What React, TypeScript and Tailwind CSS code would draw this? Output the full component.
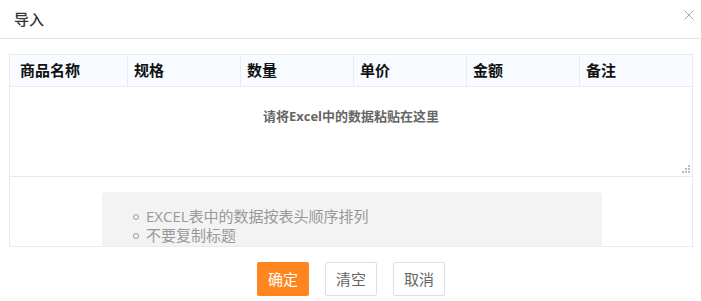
import React from "react";

const cols = ["商品名称", "规格", "数量", "单价", "金额", "备注"];

export default function App() {
  return (
    <div
      className="w-[701px] h-[301px] bg-white relative overflow-hidden"
      style={{ fontFamily: '"Open Sans", "Noto Sans CJK SC", sans-serif' }}
    >
      <div className="h-[39px] border-b border-[#e5e5e5] flex items-center pl-[14px]">
        <span className="text-[15px] text-[#333] font-medium leading-none">导入</span>
      </div>
      <div className="absolute right-[7px] top-[10px]">
        <svg width="10" height="10" viewBox="0 0 10 10">
          <path d="M0.5 0.5 L9.5 9.5 M9.5 0.5 L0.5 9.5" stroke="#aaa" strokeWidth="1" />
        </svg>
      </div>

      <div className="pl-[9px] pt-[15px]">
        <div className="w-[684px] border border-[#e8ebf0]">
          <div className="grid grid-cols-[118px_113px_113px_113px_113px_112px] h-[32px] bg-[#f8fbff] border-b border-[#e8ebf0]">
            {cols.map((c, i) => (
              <div
                key={c}
                className={`flex items-center text-[15px] font-bold text-[#111] ${
                  i === 0 ? "pl-[10px]" : "pl-[6px]"
                } ${i < 5 ? "border-r border-[#e8ebf0]" : ""}`}
              >
                {c}
              </div>
            ))}
          </div>
          <div className="h-[90px] border-b border-[#e8ebf0] relative">
            <div className="pt-[21px] text-center text-[13px] leading-[17px] font-bold text-[#666]">
              请将Excel中的数据粘贴在这里
            </div>
            <svg className="absolute right-[2px] bottom-[3px]" width="9" height="9" viewBox="0 0 9 9">
              <rect x="7" y="1" width="2" height="2" fill="#bbb" />
              <rect x="4" y="4" width="2" height="2" fill="#bbb" />
              <rect x="7" y="4" width="2" height="2" fill="#bbb" />
              <rect x="1" y="7" width="2" height="2" fill="#bbb" />
              <rect x="4" y="7" width="2" height="2" fill="#bbb" />
              <rect x="7" y="7" width="2" height="2" fill="#bbb" />
            </svg>
          </div>
          <div className="h-[69px] pt-[15px] pl-[92px] overflow-hidden">
            <div className="w-[500px] h-[80px] bg-[#f3f3f3] rounded-[4px] pt-[15px] pl-[31px]">
              {["EXCEL表中的数据按表头顺序排列", "不要复制标题"].map((t) => (
                <div key={t} className="flex items-center h-[19px] text-[15px] text-[#999]">
                  <span className="w-[6px] h-[6px] rounded-full border border-[#999] mr-[7px] shrink-0" />
                  <span>{t}</span>
                </div>
              ))}
            </div>
          </div>
        </div>
      </div>

      <div className="flex justify-center gap-[16px] pt-[15px] pl-[1px]">
        <button className="w-[52px] h-[34px] rounded-[2px] bg-[#ff851f] text-white text-[15px]">确定</button>
        <button className="w-[52px] h-[34px] rounded-[2px] bg-white border border-[#dcdfe6] text-[#666] text-[15px]">清空</button>
        <button className="w-[52px] h-[34px] rounded-[2px] bg-white border border-[#dcdfe6] text-[#666] text-[15px]">取消</button>
      </div>
    </div>
  );
}
